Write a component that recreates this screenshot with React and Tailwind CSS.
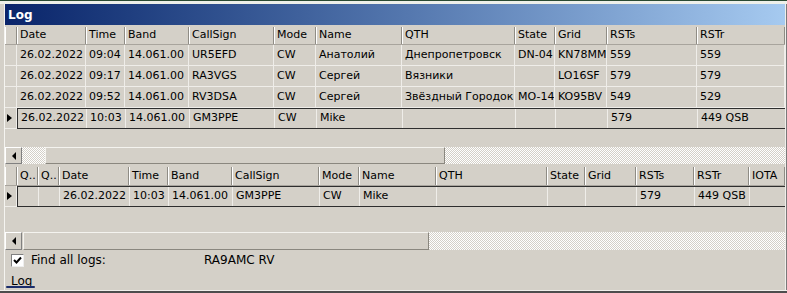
const cols1 = [
  { label: 'Date', w: 'w-[69px]' },
  { label: 'Time', w: 'w-[39px]' },
  { label: 'Band', w: 'w-[64px]' },
  { label: 'CallSign', w: 'w-[85px]' },
  { label: 'Mode', w: 'w-[42px]' },
  { label: 'Name', w: 'w-[86px]' },
  { label: 'QTH', w: 'w-[113px]' },
  { label: 'State', w: 'w-[40px]' },
  { label: 'Grid', w: 'w-[52px]' },
  { label: 'RSTs', w: 'w-[90px]' },
  { label: 'RSTr', w: 'w-[88px]' },
];

const rows1 = [
  ['26.02.2022', '09:04', '14.061.00', 'UR5EFD', 'CW', 'Анатолий', 'Днепропетровск', 'DN-04', 'KN78MM', '559', '559'],
  ['26.02.2022', '09:17', '14.061.00', 'RA3VGS', 'CW', 'Сергей', 'Вязники', '', 'LO16SF', '579', '579'],
  ['26.02.2022', '09:52', '14.061.00', 'RV3DSA', 'CW', 'Сергей', 'Звёздный Городок', 'MO-14', 'KO95BV', '549', '529'],
  ['26.02.2022', '10:03', '14.061.00', 'GM3PPE', 'CW', 'Mike', '', '', '', '579', '449 QSB'],
];

const cols2 = [
  { label: 'Q..', w: 'w-[21px]' },
  { label: 'Q..', w: 'w-[21px]' },
  { label: 'Date', w: 'w-[70px]' },
  { label: 'Time', w: 'w-[39px]' },
  { label: 'Band', w: 'w-[64px]' },
  { label: 'CallSign', w: 'w-[87px]' },
  { label: 'Mode', w: 'w-[40px]' },
  { label: 'Name', w: 'w-[77px]' },
  { label: 'QTH', w: 'w-[111px]' },
  { label: 'State', w: 'w-[38px]' },
  { label: 'Grid', w: 'w-[51px]' },
  { label: 'RSTs', w: 'w-[58px]' },
  { label: 'RSTr', w: 'w-[55px]' },
  { label: 'IOTA', w: 'w-[36px]' },
];

const row2 = ['', '', '26.02.2022', '10:03', '14.061.00', 'GM3PPE', 'CW', 'Mike', '', '', '', '579', '449 QSB', ''];

const checker = 'bg-[image:repeating-conic-gradient(#d4d0c8_0_25%,#ffffff_0_50%)] bg-[length:2px_2px]';

function HeaderRow({ cols, h }) {
  return (
    <div className={`flex ${h} border-b border-[#a8a49d]`}>
      <div className="w-[12px] shrink-0 border-r border-[#8f8c85] shadow-[inset_1px_0_0_#ffffff]" />
      {cols.map((c, i) => (
        <div key={i} className={`${c.w} shrink-0 flex items-center pl-[3px] whitespace-nowrap overflow-hidden border-r border-[#8f8c85] shadow-[inset_1px_0_0_#ffffff]`}>
          {c.label}
        </div>
      ))}
    </div>
  );
}

function DataRow({ cols, cells, selected }) {
  return (
    <div className="flex h-[21px]">
      <div className="w-[12px] shrink-0 flex items-center pl-[2px] border-r border-b border-[#efede9]">
        {selected && <span className="w-0 h-0 border-y-[4px] border-y-transparent border-l-[5px] border-l-black" />}
      </div>
      <div className={`flex ${selected ? 'border-y border-l border-[#2e2e2e]' : 'border-b border-[#efede9]'}`}>
        {cols.map((c, i) => (
          <div key={i} className={`${c.w} shrink-0 flex items-center pl-[3px] whitespace-nowrap overflow-hidden border-r border-[#efede9]`}>
            {cells[i]}
          </div>
        ))}
      </div>
    </div>
  );
}

function ScrollBar({ track, h }) {
  return (
    <div className={`flex ${h}`}>
      <div className="w-[17px] shrink-0 flex items-center justify-center border border-t-white border-l-white border-r-[#808080] border-b-[#808080] bg-[#d4d0c8]">
        <span className="w-0 h-0 border-y-[4px] border-y-transparent border-r-[4px] border-r-black" />
      </div>
      {track === 'gap' && <div className={`w-[23px] shrink-0 ${checker}`} />}
      <div className={`${track === 'gap' ? 'w-[400px]' : 'w-[406px] ml-[1px]'} shrink-0 border border-t-[#f4f3ef] border-l-[#f4f3ef] border-r-[#8a877f] border-b-[#8a877f] bg-[#d4d0c8]`} />
      <div className={`flex-1 ${checker}`} />
    </div>
  );
}

export default function App() {
  return (
    <div className="w-[787px] h-[293px] bg-[#d4d0c8] flex flex-col overflow-hidden font-['DejaVu_Sans',sans-serif] text-[11px] text-black">
      <div className="h-[1px] bg-[#2a4a32]" />
      <div className="h-[3px] bg-[#eef0ea]" />
      <div className="flex flex-1">
        <div className="w-[5px] shrink-0 border-r border-[#f5f4f0]" />
        <div className="w-[780px] shrink-0 flex flex-col">
          <div className="h-[21px] flex items-center pl-[3px] bg-gradient-to-r from-[#0a246a] to-[#a6caf0] text-white font-bold text-[12px]">
            Log
          </div>
          <div className="h-[2px]" />
          <HeaderRow cols={cols1} h="h-[18px]" />
          {rows1.map((r, i) => (
            <DataRow key={i} cols={cols1} cells={r} selected={i === 3} />
          ))}
          <div className="h-[18px]" />
          <ScrollBar track="gap" h="h-[17px]" />
          <div className="h-[3px]" />
          <HeaderRow cols={cols2} h="h-[19px]" />
          <DataRow cols={cols2} cells={row2} selected />
          <div className="h-[25px]" />
          <ScrollBar track="none" h="h-[18px]" />
          <div className="h-[20px] flex items-center">
            <div className="ml-[6px] w-[13px] h-[13px] bg-white border border-t-[#808080] border-l-[#808080] border-r-[#eeeeee] border-b-[#eeeeee] flex items-center justify-center">
              <svg width="9" height="9" viewBox="0 0 9 9">
                <path d="M1 4 L3.5 6.5 L8 1.5" stroke="black" strokeWidth="2" fill="none" />
              </svg>
            </div>
            <span className="ml-[7px] w-[173px] text-[12px]">Find all logs:</span>
            <span className="text-[12px]">RA9AMC RV</span>
          </div>
          <div className="h-[20px] relative">
            <span className="absolute left-[6px] top-[2px] text-[12px]">Log</span>
            <div className="absolute left-[1px] top-[16px] w-[29px] h-[2px] bg-[#1b2d6b] rounded-full" />
          </div>
        </div>
        <div className="w-[2px] shrink-0 border-l border-[#f0efeb] bg-[#7a7a7a]" />
      </div>
      <div className="h-[3px] border-t border-[#f0efeb] bg-[#4d4d4d]" />
    </div>
  );
}
